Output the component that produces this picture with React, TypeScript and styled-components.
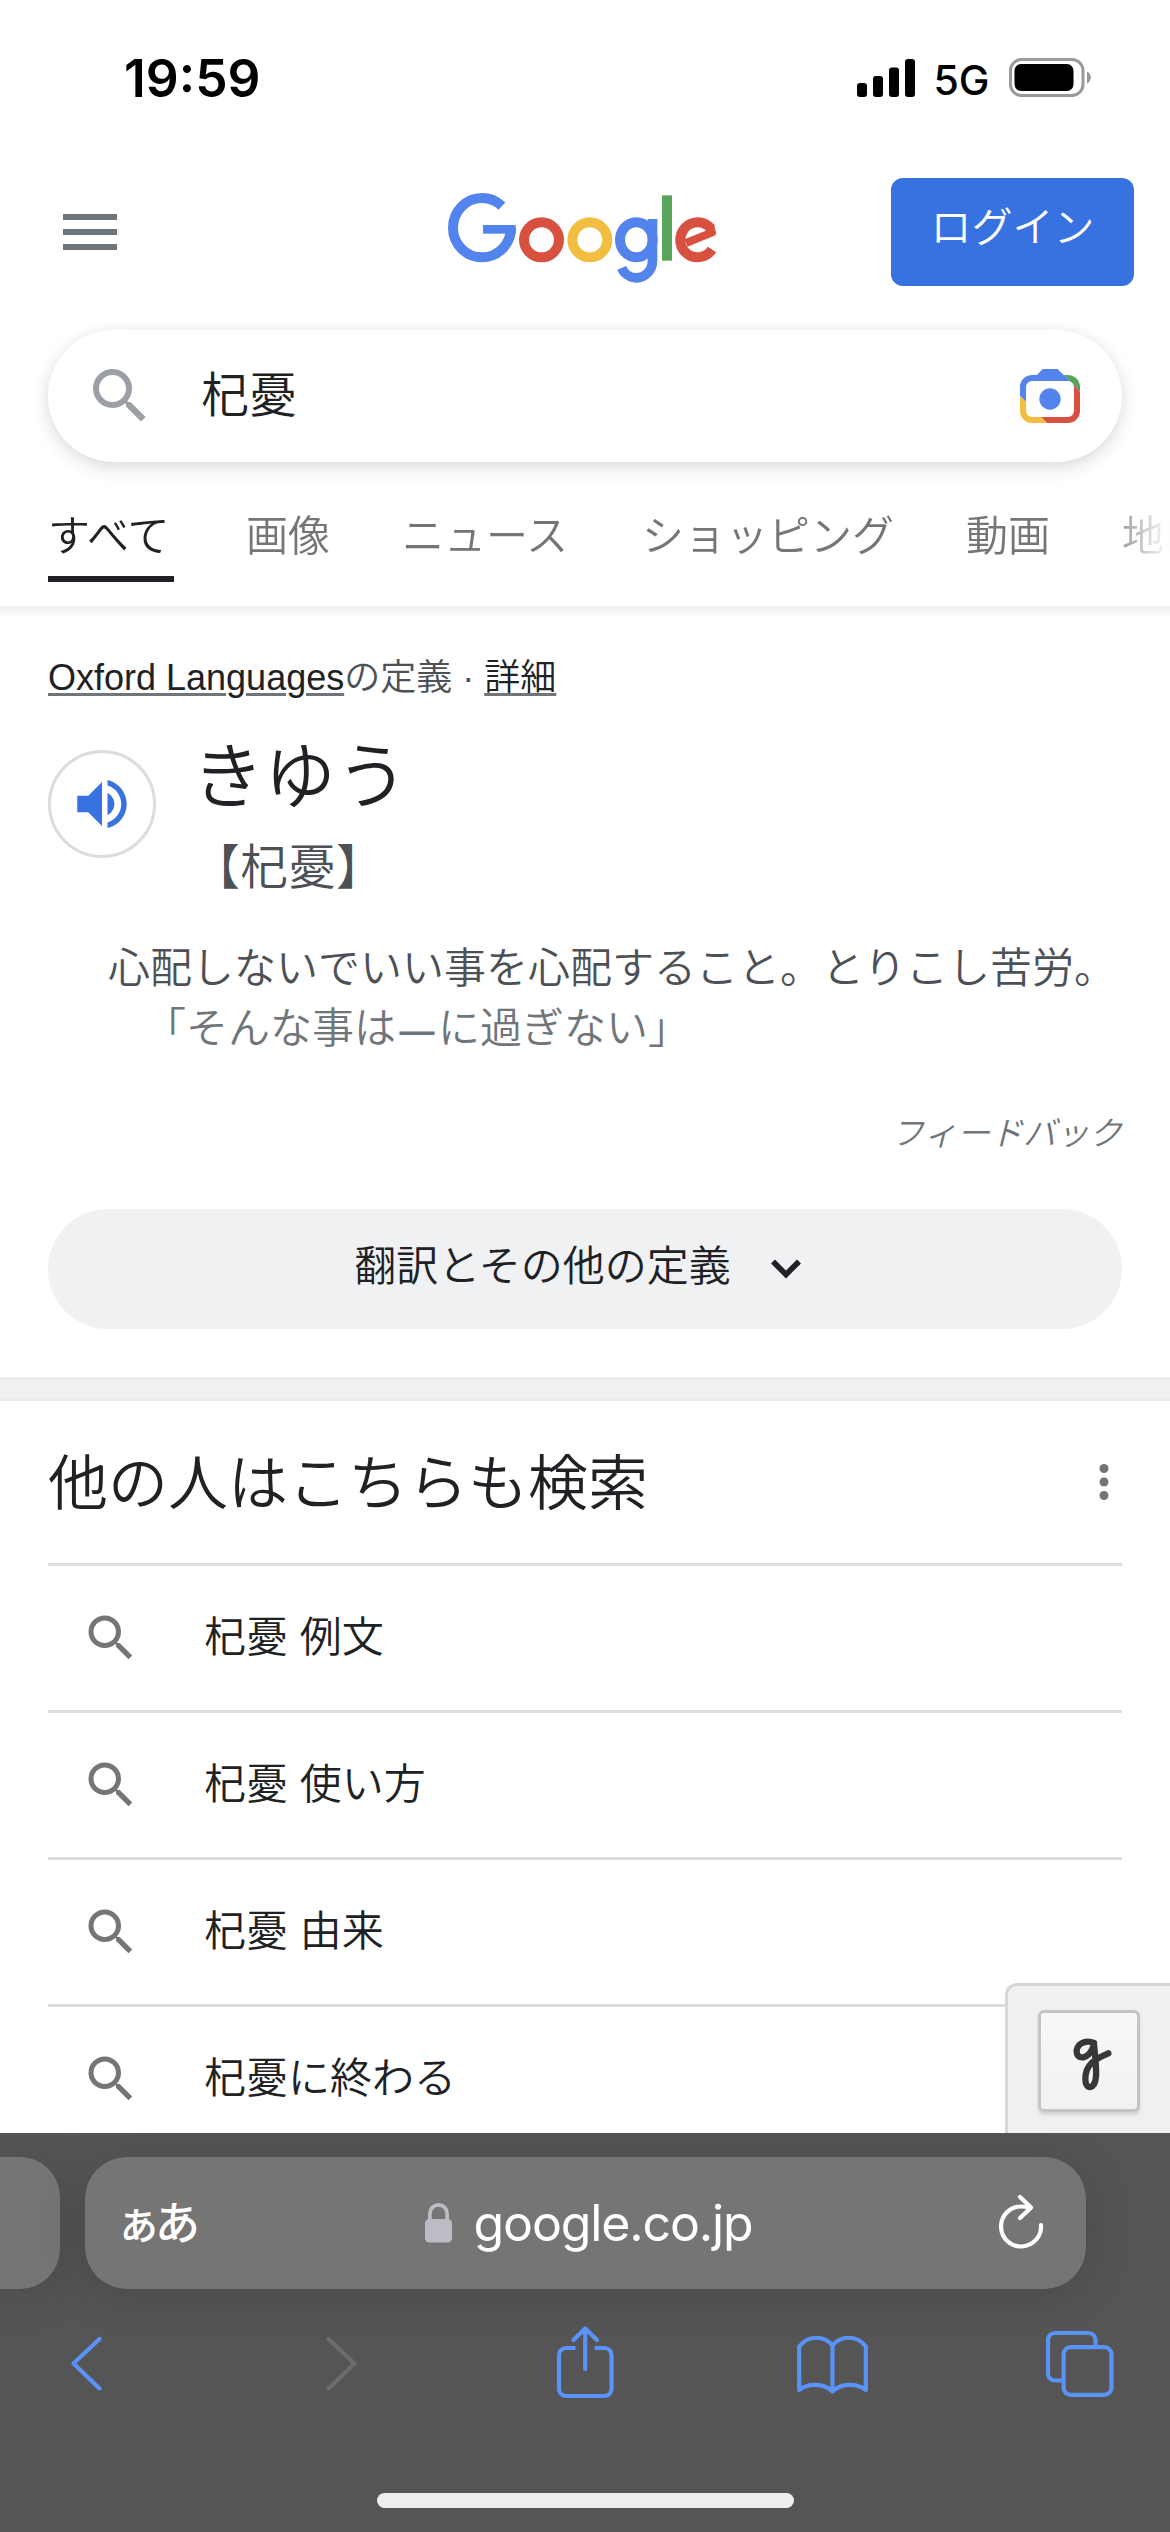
import React from "react";
import styled, { createGlobalStyle } from "styled-components";

const SANS = '"Liberation Sans", "Noto Sans CJK JP", sans-serif';
const SYSTEM = 'Inter, "Noto Sans CJK JP", sans-serif';

const GlobalStyle = createGlobalStyle`
  *, *::before, *::after { box-sizing: border-box; }
  body { margin: 0; background: #fff; }
  svg { display: block; flex: none; }
`;

const Screen = styled.div`
  display: flex;
  flex-direction: column;
  width: 1170px;
  height: 2532px;
  overflow: hidden;
  background: #fff;
  color: #202124;
  font-family: ${SANS};
  font-weight: 350;
  font-kerning: none;
`;

const StatusBar = styled.div`
  display: flex;
  align-items: center;
  flex: none;
  height: 156px;
  padding: 0 79px 0 124px;
  font-family: ${SYSTEM};
  color: #000;
`;

const Clock = styled.span`
  flex: 1;
  font-size: 51.5px;
  font-weight: 600;
  line-height: 60px;
`;

const Network = styled.span`
  margin: 3px 20px 0 19px;
  font-size: 41px;
  font-weight: 500;
  letter-spacing: -0.3px;
  line-height: 50px;
`;

const Page = styled.main`
  position: relative;
  flex: 1;
  min-height: 0;
  overflow: hidden;
`;

const Header = styled.header`
  display: grid;
  grid-template-columns: 385px 270px 1fr;
  align-items: center;
  height: 108px;
  margin-top: 21px;
  padding: 0 36px 0 63px;
`;

const MenuButton = styled.button`
  display: flex;
  flex-direction: column;
  gap: 9px;
  width: 54px;
  padding: 0;
  border: 0;
  background: none;
`;

const MenuLine = styled.span`
  height: 6px;
  background: #70757a;
`;

const LogoSlot = styled.div`
  margin-top: 13px;
`;

const LoginButton = styled.a`
  justify-self: end;
  width: 243px;
  height: 108px;
  border-radius: 12px;
  background: #3871e0;
  color: #fff;
  font-size: 41px;
  line-height: 100px;
  text-align: center;
`;

const SearchBox = styled.div`
  display: flex;
  align-items: center;
  height: 132px;
  margin: 45px 48px 0;
  padding: 0 42px 0 36px;
  border-radius: 66px;
  background: #fff;
  box-shadow: 0 6px 18px rgba(32, 33, 36, 0.14), 0 0 12px rgba(32, 33, 36, 0.04);
`;

const Query = styled.span`
  flex: 1;
  margin-left: 45px;
  font-size: 48px;
  line-height: 60px;
`;

const Tabs = styled.nav`
  display: flex;
  gap: 72px;
  height: 144px;
  padding-left: 48px;
  overflow: hidden;
  font-kerning: normal;
  -webkit-mask-image: linear-gradient(to right, #000 1100px, transparent 1170px);
  mask-image: linear-gradient(to right, #000 1100px, transparent 1170px);
`;

const Tab = styled.a<{ $active?: boolean; $chars: number }>`
  flex: none;
  min-width: ${(p) => p.$chars}em;
  height: 120px;
  padding-top: 36px;
  border-bottom: 6px solid ${(p) => (p.$active ? "#202124" : "transparent")};
  color: ${(p) => (p.$active ? "#202124" : "#757575")};
  font-size: 42px;
  line-height: 77px;
  white-space: nowrap;
`;

const TabShade = styled.div`
  height: 12px;
  background: linear-gradient(#f0f0f0, #fff);
`;

const Definition = styled.section`
  padding: 33px 48px 48px;
`;

const Source = styled.p`
  margin: 0;
  color: #4d5156;
  font-size: 36px;
  line-height: 54px;
  white-space: pre;
`;

const SourceLink = styled.a`
  color: #202124;
  text-decoration: underline;
  text-decoration-color: #70757a;
  text-decoration-thickness: 3px;
  text-underline-offset: 3px;
`;

const WordRow = styled.div`
  display: flex;
  gap: 36px;
  margin-top: 27px;
`;

const ListenButton = styled.button`
  display: flex;
  align-items: center;
  justify-content: center;
  width: 108px;
  height: 108px;
  margin-top: 18px;
  padding: 0;
  border: 3px solid #dadce0;
  border-radius: 50%;
  background: #fff;
`;

const Reading = styled.div`
  font-size: 72px;
  line-height: 90px;
`;

const Kanji = styled.div`
  margin-top: 16px;
  color: #4d5156;
  font-size: 48px;
  line-height: 60px;
`;

const Meaning = styled.p`
  margin: 41px 0 0 60px;
  color: #4d5156;
  font-size: 42px;
  line-height: 60px;
  white-space: nowrap;
`;

const Example = styled.p`
  height: 60px;
  margin: 0 0 0 96px;
  color: #70757a;
  font-size: 42px;
  line-height: 60px;
`;

const Dash = styled.span`
  display: inline-block;
  width: 42px;
  font-size: 35px;
  font-weight: 700;
  line-height: 1;
  text-align: center;
`;

const Feedback = styled.div`
  margin-top: 54px;
  color: #70757a;
  font-size: 33px;
  font-style: italic;
  line-height: 42px;
  text-align: right;
`;

const MoreButton = styled.button`
  display: flex;
  align-items: center;
  justify-content: center;
  gap: 40px;
  width: 100%;
  height: 120px;
  margin-top: 54px;
  padding: 0 15px 0 0;
  border: 0;
  border-radius: 60px;
  background: #f0f1f3;
  color: #202124;
  font-family: inherit;
  font-size: 42px;
  font-weight: inherit;
  line-height: 60px;
`;

const MoreLabel = styled.span`
  margin-top: -4px;
`;

const SectionGap = styled.div`
  height: 24px;
  border: solid #ebebec;
  border-width: 3px 0;
  background: #f0f1f3;
`;

const RelatedHeader = styled.div`
  display: flex;
  align-items: center;
  justify-content: space-between;
  height: 162px;
  padding: 0 61px 0 48px;
`;

const RelatedTitle = styled.h2`
  margin: 6px 0 0;
  font-size: 60px;
  font-weight: inherit;
  line-height: 80px;
`;

const RelatedList = styled.ul`
  margin: 0 48px;
  padding: 0;
  list-style: none;
`;

const RelatedItem = styled.li`
  display: flex;
  align-items: center;
  gap: 63px;
  height: 147px;
  padding-left: 33px;
  border-top: 3px solid #dadce0;
  font-size: 42px;
  line-height: 60px;
`;

const HandwritingPanel = styled.div`
  position: absolute;
  right: 0;
  bottom: 0;
  width: 165px;
  height: 150px;
  padding: 24px 0 0 30px;
  border: solid #d6d6d6;
  border-width: 3px 0 0 3px;
  border-top-left-radius: 12px;
  background: #f0f0f0;
`;

const HandwritingButton = styled.button`
  display: flex;
  align-items: center;
  justify-content: center;
  width: 102px;
  height: 102px;
  padding: 0;
  border: 3px solid #c4c4c4;
  border-radius: 6px;
  background: linear-gradient(#f8f8f8, #f1f1f1);
  box-shadow: 0 3px 3px rgba(0, 0, 0, 0.12);
`;

const BrowserBar = styled.footer`
  display: flex;
  flex-direction: column;
  flex: none;
  height: 399px;
  padding-top: 24px;
  background: #555;
  color: #fff;
  font-family: ${SYSTEM};
  font-weight: 400;
  overflow: hidden;
`;

const PillRow = styled.div`
  display: flex;
  gap: 25px;
`;

const Pill = styled.div`
  height: 132px;
  background: #757575;
  box-shadow: 0 6px 50px rgba(0, 0, 0, 0.14);
`;

const PreviousPill = styled(Pill)`
  width: 60px;
  border-radius: 0 40px 40px 0;
`;

const AddressPill = styled(Pill)`
  display: grid;
  grid-template-columns: 1fr auto 1fr;
  align-items: center;
  width: 1001px;
  padding: 0 41px 0 36px;
  border-radius: 42px;
`;

const ReaderGlyphs = styled.span`
  display: flex;
  align-items: baseline;
  margin: 2px 0 0 -5px;
  font-size: 45px;
  font-weight: 500;
  letter-spacing: -6px;
  line-height: 60px;
`;

const Domain = styled.span`
  display: flex;
  align-items: center;
  gap: 21px;
  margin-left: 11px;
  font-size: 50px;
  letter-spacing: -1.15px;
  line-height: 60px;
`;

const ReloadSlot = styled.span`
  justify-self: end;
`;

const Toolbar = styled.div`
  display: flex;
  justify-content: space-between;
  margin-top: 34px;
  padding: 0 52px 0 50px;
`;

const HomeIndicator = styled.div`
  align-self: center;
  width: 417px;
  height: 15px;
  margin-top: 90px;
  border-radius: 8px;
  background: #eee;
`;

const SignalIcon = () => (
  <svg width="58" height="38" viewBox="0 0 58 38">
    <rect x="0" y="24" width="10" height="14" rx="3" />
    <rect x="16" y="17" width="10" height="21" rx="3" />
    <rect x="32" y="8.500" width="10" height="29.500" rx="3" />
    <rect x="48" y="0" width="10" height="38" rx="3" />
  </svg>
);

const BatteryIcon = () => (
  <svg width="82" height="40" viewBox="0 0 82 40">
    <rect x="1.500" y="1.500" width="72.500" height="36" rx="11" fill="none" stroke="#999" strokeWidth="3" />
    <rect x="5.500" y="6" width="59" height="27" rx="6.500" />
    <path d="M78 13.500c5 2 5 10 0 12z" fill="#999" />
  </svg>
);

const SearchIcon = ({ size, color }: { size: number; color: string }) => (
  <svg width={size} height={size} viewBox="0 0 24 24" fill={color}>
    <path d="M15.500 14h-.79l-.28-.27A6.471 6.471 0 0 0 16 9.500 6.500 6.500 0 1 0 9.500 16c1.610 0 3.090-.59 4.230-1.570l.27.28v.79l5 4.990L20.490 19l-4.990-5zm-6 0C7.010 14 5 11.990 5 9.500S7.010 5 9.500 5 14 7.010 14 9.500 11.990 14 9.500 14z" />
  </svg>
);

const GoogleLogo = () => (
  <svg width="270" height="96" viewBox="54 60 810 288" fill="none" strokeWidth="30" role="img" aria-label="Google">
    <ellipse cx="156" cy="173" rx="87" ry="89" stroke="#5383ec" pathLength={360} strokeDasharray="313 47" />
    <rect x="159" y="165" width="98" height="26" fill="#5383ec" />
    <circle cx="334.500" cy="209.500" r="52.500" stroke="#d8503f" />
    <circle cx="479.500" cy="209.500" r="52.500" stroke="#f1be42" />
    <ellipse cx="619" cy="209.500" rx="49" ry="52.500" stroke="#5383ec" />
    <rect x="653" y="147" width="29" height="126" fill="#5383ec" />
    <ellipse cx="619" cy="272" rx="48.500" ry="51.500" stroke="#5383ec" strokeWidth="29" pathLength={360} strokeDasharray="154 206" />
    <rect x="696" y="76" width="30" height="196" fill="#58a55c" />
    <g stroke="#d8503f">
      <ellipse cx="803" cy="209.500" rx="52" ry="52.500" pathLength={360} strokeDasharray="285 75" transform="rotate(34 803 209.500)" />
      <line x1="768" y1="219" x2="852" y2="185" strokeWidth="24" />
      <polygon points="828,186 852,163 859,192 842,198" fill="#d8503f" stroke="none" />
    </g>
  </svg>
);

const LensIcon = () => {
  const parts = [
    ["blue", "#5383ec", "100,87 233,87 269,123 210,177 138,186 100,148"],
    ["green", "#58a55c", "233,87 320,87 320,175 282,137 210,177 269,123"],
    ["red", "#d8503f", "320,175 282,137 210,177 183,231 212,260 320,260"],
    ["yellow", "#f1be42", "100,148 138,186 210,177 183,231 212,260 100,260"],
  ];
  return (
    <svg width="60" height="54" viewBox="120 87 180 162">
      {parts.map(([id, color, points]) => (
        <g key={id}>
          <clipPath id={`lens-${id}`}>
            <polygon points={points} />
          </clipPath>
          <rect x="129" y="114" width="162" height="126" rx="27" fill="none" stroke={color} strokeWidth="18" clipPath={`url(#lens-${id})`} />
        </g>
      ))}
      <polygon points="188,87 233,87 262,116 160,116" fill="#5383ec" />
      <circle cx="210" cy="177" r="32" fill="#5383ec" />
    </svg>
  );
};

const SpeakerIcon = () => (
  <svg width="66" height="66" viewBox="0 0 24 24" fill="#3871e0">
    <path d="M3 9v6h4l5 5V4L7 9H3zm13.500 3c0-1.770-1.020-3.290-2.500-4.030v8.050c1.480-.73 2.500-2.250 2.500-4.020zM14 3.230v2.060c2.890.86 5 3.540 5 6.710s-2.110 5.850-5 6.710v2.060c4.010-.91 7-4.490 7-8.770s-2.990-7.860-7-8.770z" />
  </svg>
);

const ChevronDown = () => (
  <svg width="30" height="20" viewBox="0 0 30 20" fill="none" stroke="#202124" strokeWidth="5.600">
    <path d="M2 2.500 15 15.500 28 2.500" />
  </svg>
);

const MoreDots = () => (
  <svg width="10" height="36" viewBox="0 0 10 36" fill="#70757a">
    <circle cx="5" cy="4.500" r="4.500" />
    <circle cx="5" cy="18" r="4.500" />
    <circle cx="5" cy="31.500" r="4.500" />
  </svg>
);

const HandwritingIcon = () => (
  <svg width="96" height="96" viewBox="153 129 288 288" fill="none" stroke="#373735" strokeWidth="19" strokeLinecap="round" strokeLinejoin="round">
    <path d="M312 219C292 210 264 217 260 241c-2 30 37 32 52-18 3 34 8 66 6 97-3 40-32 41-32 7 0-44 29-60 69-77" />
  </svg>
);

const LockIcon = () => (
  <svg width="28" height="40" viewBox="0 0 28 40">
    <rect x="0" y="16" width="27" height="23.500" rx="4.500" fill="#bdbcc4" />
    <path d="M4.900 18V10.500a8.600 8.600 0 0 1 17.200 0V18" fill="none" stroke="#bdbcc4" strokeWidth="3.800" />
  </svg>
);

const ReloadIcon = () => (
  <svg width="46" height="56" viewBox="0 0 46 56" fill="none" stroke="#fff" strokeWidth="4.200" strokeLinecap="round" strokeLinejoin="round">
    <path d="M42 30A20 20 0 1 1 22 11.500q4 0 8 1.300" />
    <path d="M21 1.900 32 12.600 21 23" />
  </svg>
);

const ToolIcon = ({ color = "#5a93f8", children }: { color?: string; children: React.ReactNode }) => (
  <svg width="72" height="80" viewBox="0 0 72 80" fill="none" stroke={color} strokeWidth="4.200" strokeLinecap="round" strokeLinejoin="round">
    {children}
  </svg>
);

const tabs = ["すべて", "画像", "ニュース", "ショッピング", "動画", "地図"];
const related = ["杞憂 例文", "杞憂 使い方", "杞憂 由来", "杞憂に終わる"];

export default function App() {
  return (
    <Screen lang="ja">
      <GlobalStyle />
      <StatusBar>
        <Clock>19:59</Clock>
        <SignalIcon />
        <Network>5G</Network>
        <BatteryIcon />
      </StatusBar>

      <Page>
        <Header>
          <MenuButton aria-label="メニュー">
            <MenuLine />
            <MenuLine />
            <MenuLine />
          </MenuButton>
          <LogoSlot>
            <GoogleLogo />
          </LogoSlot>
          <LoginButton>ログイン</LoginButton>
        </Header>

        <SearchBox>
          <SearchIcon size={72} color="#9aa0a6" />
          <Query>杞憂</Query>
          <LensIcon />
        </SearchBox>

        <Tabs>
          {tabs.map((label, i) => (
            <Tab key={label} $active={i === 0} $chars={label.length}>
              {label}
            </Tab>
          ))}
        </Tabs>
        <TabShade />

        <Definition>
          <Source>
            <SourceLink>Oxford Languages</SourceLink>の定義 · <SourceLink>詳細</SourceLink>
          </Source>
          <WordRow>
            <ListenButton aria-label="発音">
              <SpeakerIcon />
            </ListenButton>
            <div>
              <Reading>きゆう</Reading>
              <Kanji>【杞憂】</Kanji>
            </div>
          </WordRow>
          <Meaning>心配しないでいい事を心配すること。とりこし苦労。</Meaning>
          <Example>
            「そんな事は<Dash>—</Dash>に過ぎない」
          </Example>
          <Feedback>フィードバック</Feedback>
          <MoreButton>
            <MoreLabel>翻訳とその他の定義</MoreLabel>
            <ChevronDown />
          </MoreButton>
        </Definition>

        <SectionGap />

        <RelatedHeader>
          <RelatedTitle>他の人はこちらも検索</RelatedTitle>
          <MoreDots />
        </RelatedHeader>
        <RelatedList>
          {related.map((label) => (
            <RelatedItem key={label}>
              <SearchIcon size={60} color="#757575" />
              {label}
            </RelatedItem>
          ))}
        </RelatedList>

        <HandwritingPanel>
          <HandwritingButton aria-label="手書き入力">
            <HandwritingIcon />
          </HandwritingButton>
        </HandwritingPanel>
      </Page>

      <BrowserBar>
        <PillRow>
          <PreviousPill />
          <AddressPill>
            <ReaderGlyphs>ぁあ</ReaderGlyphs>
            <Domain>
              <LockIcon />
              google.co.jp
            </Domain>
            <ReloadSlot>
              <ReloadIcon />
            </ReloadSlot>
          </AddressPill>
        </PillRow>
        <Toolbar>
          <ToolIcon>
            <path d="M49.500 16 23.500 40.500 49.500 65.500" />
          </ToolIcon>
          <ToolIcon color="#6c6c6c">
            <path d="M29.500 16 55.500 40.500 29.500 65.500" />
          </ToolIcon>
          <ToolIcon>
            <path d="M27.500 25H18a7 7 0 0 0-7 7V66a7 7 0 0 0 7 7H56.500a7 7 0 0 0 7-7V32a7 7 0 0 0-7-7H46.500" strokeLinecap="butt" />
            <path d="M37.200 5.500V46M25.500 17 37.200 5.500 49 17" />
          </ToolIcon>
          <ToolIcon>
            <path d="M2.200 23.500C11 12 27 12 35.500 22.500 44 12 60 12 68.800 23.500V67C60 60 44 60 35.500 68.500 27 60 11 60 2.200 67ZM35.500 22.500V68" />
          </ToolIcon>
          <ToolIcon>
            <path d="M15.500 57.500H9a7 7 0 0 1-7-7V17a7 7 0 0 1 7-7H42.500a7 7 0 0 1 7 7v6" strokeLinecap="butt" />
            <rect x="17.600" y="24.100" width="47.800" height="47.800" rx="7" />
          </ToolIcon>
        </Toolbar>
        <HomeIndicator />
      </BrowserBar>
    </Screen>
  );
}
